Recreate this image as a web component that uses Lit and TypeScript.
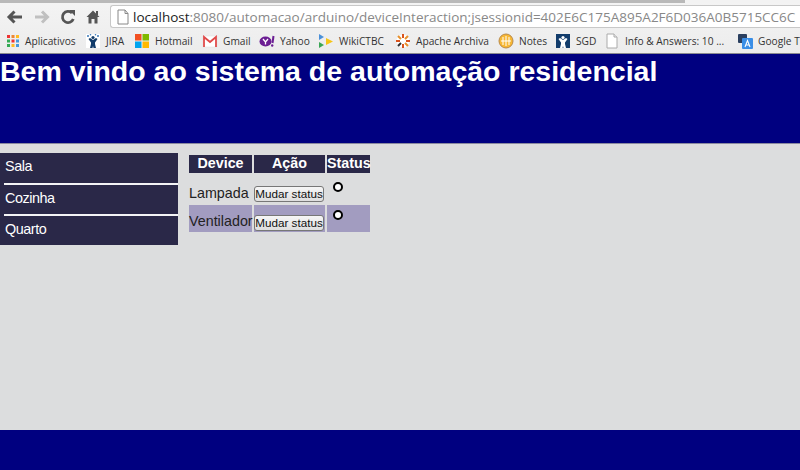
import { LitElement, html, css, svg } from "lit";
import { customElement } from "lit/decorators.js";

const bookmarks = [
  { label: "Aplicativos", w: 81, icon: "apps" },
  { label: "JIRA", w: 49, icon: "jira" },
  { label: "Hotmail", w: 68, icon: "ms" },
  { label: "Gmail", w: 57, icon: "gmail" },
  { label: "Yahoo", w: 59, icon: "yahoo" },
  { label: "WikiCTBC", w: 77, icon: "wiki" },
  { label: "Apache Archiva", w: 103, icon: "apache" },
  { label: "Notes", w: 57, icon: "notes" },
  { label: "SGD", w: 49, icon: "sgd" },
  { label: "Info & Answers: 10 ...", w: 133, icon: "doc" },
  { label: "Google T", w: 63, icon: "gt" },
];

const appDots = ["#e33", "#e83", "#fb2", "#3a5", "#e33", "#49d", "#3a5", "#fb2", "#49d"];

function bmIcon(k: string) {
  switch (k) {
    case "apps":
      return svg`${appDots.map((c, i) => svg`<rect x=${3 + (i % 3) * 4.5} y=${2 + Math.floor(i / 3) * 4.5} width="3" height="3" fill=${c} />`)}`;
    case "jira":
      return svg`<rect x="1" y="1" width="14" height="14" fill="#fff"/><path d="M8 7 L5 5 L3.5 6 L6 9.5 L6 11 L5 15 H7.5 L8 13 L8.5 15 H11 L10 11 L10 9.5 L12.5 6 L11 5 Z" fill="#123c6b"/><circle cx="8" cy="4.5" r="1.6" fill="#123c6b"/><circle cx="3" cy="3" r="1" fill="#3a78b8"/><circle cx="13" cy="3" r="1" fill="#3a78b8"/><circle cx="5.5" cy="1.8" r=".8" fill="#3a78b8"/><circle cx="10.5" cy="1.8" r=".8" fill="#3a78b8"/>`;
    case "sgd":
      return svg`<rect x="1" y="1" width="14" height="14" fill="#123c6b"/><path d="M8 7 L5 5 L3.5 6 L6 9.5 L6 11 L5 15 H7.5 L8 13 L8.5 15 H11 L10 11 L10 9.5 L12.5 6 L11 5 Z" fill="#fff"/><circle cx="8" cy="4.5" r="1.6" fill="#fff"/>`;
    case "ms":
      return svg`<rect x="1" y="1" width="6.5" height="6.5" fill="#f25022"/><rect x="8.5" y="1" width="6.5" height="6.5" fill="#7fba00"/><rect x="1" y="8.5" width="6.5" height="6.5" fill="#00a4ef"/><rect x="8.5" y="8.5" width="6.5" height="6.5" fill="#ffb900"/>`;
    case "gmail":
      return svg`<rect x="1" y="3" width="14" height="11" fill="#fff" stroke="#ddd" stroke-width=".5"/><path d="M2 14 V4 L8 9 L14 4 V14" fill="none" stroke="#e04a4a" stroke-width="1.8"/>`;
    case "yahoo":
      return svg`<ellipse cx="6.5" cy="8.5" rx="6" ry="5" fill="#6b1e93"/><path d="M4 6 L6.5 9 L9 6 M6.5 9 V11.5" stroke="#fff" stroke-width="1.3" fill="none"/><path d="M14.5 3 L13.5 10" stroke="#6b1e93" stroke-width="2"/><circle cx="13.2" cy="12.5" r="1.2" fill="#6b1e93"/>`;
    case "wiki":
      return svg`<path d="M1 1 L6 4 L1 7 Z" fill="#4a90d9"/><path d="M1 9 L6 12 L1 15 Z" fill="#3aa655"/><path d="M8 5 L15 8.5 L8 12 Z" fill="#f5c518"/>`;
    case "apache":
      return svg`<circle cx="8" cy="8" r="6.5" fill="#fff"/><g stroke="#d9541e" stroke-width="2"><path d="M8 1 V5 M8 11 V15 M1 8 H5 M11 8 H15"/><path d="M3 3 L6 6 M10 10 L13 13 M13 3 L10 6" stroke="#e8912d"/></g><path d="M3 13 L6 10" stroke="#333" stroke-width="2"/>`;
    case "notes":
      return svg`<circle cx="8" cy="8" r="7" fill="#f7b733" stroke="#b98a4a"/><path d="M5 4 V12 M8 3 V13 M11 4 V12 M3 8 H13" stroke="#fff" stroke-width="1"/>`;
    case "doc":
      return svg`<path d="M3 1 H10 L13 4 V15 H3 Z" fill="#fff" stroke="#aaa"/><path d="M10 1 V4 H13" fill="#eee" stroke="#aaa"/>`;
    default:
      return svg`<rect x="1" y="1" width="9" height="9" rx="1" fill="#2a3f5f"/><rect x="5" y="5" width="11" height="11" rx="1" fill="#3a8ee6"/><path d="M8 14 L10.5 7.5 L13 14 M9 12 H12" stroke="#fff" stroke-width="1.1" fill="none"/>`;
  }
}

@customElement("app-root")
export class AppRoot extends LitElement {
  static styles = css`
    :host {
      display: flex;
      flex-direction: column;
      width: 800px;
      height: 470px;
      overflow: hidden;
      background: #dcddde;
      font-family: "Liberation Sans", Arial, sans-serif;
    }
    .chrome {
      height: 54px;
      flex: none;
      display: flex;
      flex-direction: column;
      background: linear-gradient(#f4f4f4, #ececec);
      border-bottom: 1px solid #8a8a90;
      box-sizing: border-box;
    }
    .tabline {
      height: 3px;
      flex: none;
      background: linear-gradient(90deg, #b9b9b9 0 685px, #f3f3f3 685px);
    }
    .toolbar {
      height: 27px;
      flex: none;
      display: flex;
      align-items: center;
      padding-left: 6px;
    }
    .nav {
      width: 26px;
      height: 20px;
      flex: none;
      display: block;
    }
    .home {
      width: 18px;
      height: 20px;
      flex: none;
      display: block;
      margin-right: 8px;
    }
    .url {
      flex: 1;
      height: 23px;
      box-sizing: border-box;
      display: flex;
      align-items: center;
      background: #fff;
      border: 1px solid #c8c8c8;
      border-right: none;
      border-radius: 3px 0 0 3px;
      padding-left: 6px;
      font-family: "Open Sans", "Liberation Sans", sans-serif;
      font-size: 13.5px;
      color: #888;
      white-space: pre;
      overflow: hidden;
    }
    .url svg {
      width: 12px;
      height: 16px;
      flex: none;
      margin-right: 4px;
    }
    .url b {
      font-weight: 400;
      color: #222;
    }
    .bookmarks {
      height: 23px;
      flex: none;
      display: flex;
      align-items: center;
      padding: 0 0 2px 4px;
      box-sizing: border-box;
      overflow: hidden;
      font-family: "Open Sans", "Liberation Sans", sans-serif;
      font-size: 10.2px;
      color: #333;
      white-space: nowrap;
    }
    .bm {
      display: flex;
      align-items: center;
      gap: 5px;
      flex: none;
    }
    .bm svg {
      width: 16px;
      height: 16px;
      flex: none;
    }
    .header {
      height: 90px;
      flex: none;
      box-sizing: border-box;
      background: #000080;
      color: #fff;
      font-size: 28.5px;
      font-weight: 700;
      line-height: 34px;
      border-bottom: 1px solid #8a8aa0;
    }
    .main {
      flex: 1;
      display: flex;
      align-items: flex-start;
      padding-top: 9px;
      gap: 9px;
    }
    .side {
      width: 178px;
      height: 92px;
      flex: none;
      background: #2a2848;
      color: #fff;
      font-size: 14.4px;
      letter-spacing: -0.45px;
      box-sizing: border-box;
      display: grid;
      grid-template-rows: 30px 2px 29px 2px 29px;
    }
    .side span {
      padding-left: 5px;
      line-height: 26px;
    }
    .side i {
      display: block;
      background: #f4f4f6;
      margin-left: 4px;
    }
    table {
      border-collapse: separate;
      border-spacing: 2px;
      font-size: 14.3px;
      color: #222;
      table-layout: fixed;
      width: 185px;
    }
    th {
      background: #2a2848;
      color: #fff;
      height: 18px;
      box-sizing: border-box;
      padding: 0 0 2px;
      font-weight: 700;
      font-size: 14.3px;
      line-height: 16px;
    }
    td {
      padding: 0;
      white-space: nowrap;
      vertical-align: top;
      box-sizing: border-box;
    }
    .r1 td {
      height: 28px;
    }
    .r2 td {
      height: 27px;
      background: #a29cc0;
    }
    .cellbtn {
      display: flex;
    }
    .r1 .cellbtn {
      padding-top: 11px;
    }
    .r2 .cellbtn {
      padding-top: 10px;
    }
    .r1 .name {
      padding-top: 10px;
    }
    .r2 .name {
      padding-top: 8px;
    }
    button {
      width: 70px;
      height: 16px;
      padding: 0;
      box-sizing: border-box;
      font-family: "Liberation Sans", Arial, sans-serif;
      font-size: 11.7px;
      line-height: 14px;
      color: #111;
      white-space: nowrap;
      background: linear-gradient(#f6f6f6, #dedede);
      border: 1px solid #777;
      border-radius: 3px;
    }
    .dot {
      display: block;
      width: 10px;
      height: 10px;
      box-sizing: border-box;
      margin-left: 6px;
      background: #fff;
      border: 2px solid #000;
      border-radius: 50%;
    }
    .r1 .status {
      padding-top: 7px;
    }
    .r2 .status {
      padding-top: 5px;
    }
    .footer {
      height: 40px;
      flex: none;
      background: #000080;
    }
  `;

  render() {
    return html`
      <div class="chrome">
        <div class="tabline"></div>
        <div class="toolbar">
          <svg class="nav" viewBox="0 0 26 20"><path d="M3 10 H16 M8.5 4.5 L3 10 L8.5 15.5" fill="none" stroke="#555" stroke-width="3"/></svg>
          <svg class="nav" viewBox="0 0 26 20"><path d="M3 10 H15 M10 4.5 L15.5 10 L10 15.5" fill="none" stroke="#c0c0c0" stroke-width="3"/></svg>
          <svg class="nav" viewBox="0 0 26 20"><path d="M14 6 A5.6 5.6 0 1 0 15.3 12" fill="none" stroke="#555" stroke-width="2.8"/><path d="M11 3 H17 V9 Z" fill="#555"/></svg>
          <svg class="home" viewBox="0 0 18 20"><path d="M9 3.5 L2.5 10 H4.5 V16.5 H7.5 V12 H10.5 V16.5 H13.5 V10 H15.5 Z" fill="#555"/><rect x="12" y="4" width="2" height="4" fill="#555"/></svg>
          <div class="url">
            <svg viewBox="0 0 12 16"><path d="M1 1 H8 L11 4.5 V15 H1 Z" fill="#fff" stroke="#888"/><path d="M8 1 V4.5 H11" fill="none" stroke="#888"/></svg><b>localhost</b><span>:8080/automacao/arduino/deviceInteraction;jsessionid=402E6C175A895A2F6D036A0B5715CC6C</span>
          </div>
        </div>
        <div class="bookmarks">
          ${bookmarks.map(
            (b) => html`<div class="bm" style="width:${b.w}px"><svg viewBox="0 0 16 16">${bmIcon(b.icon)}</svg>${b.label}</div>`
          )}
        </div>
      </div>
      <div class="header">Bem vindo ao sistema de automação residencial</div>
      <div class="main">
        <div class="side">
          <span>Sala</span><i></i><span>Cozinha</span><i></i><span>Quarto</span>
        </div>
        <table>
          <colgroup><col style="width:63px" /><col style="width:71px" /><col style="width:43px" /></colgroup>
          <tr><th>Device</th><th>Ação</th><th>Status</th></tr>
          <tr class="r1">
            <td class="name">Lampada</td>
            <td><div class="cellbtn"><button>Mudar status</button></div></td>
            <td class="status"><span class="dot"></span></td>
          </tr>
          <tr class="r2">
            <td class="name">Ventilador</td>
            <td><div class="cellbtn"><button>Mudar status</button></div></td>
            <td class="status"><span class="dot"></span></td>
          </tr>
        </table>
      </div>
      <div class="footer"></div>
    `;
  }
}
